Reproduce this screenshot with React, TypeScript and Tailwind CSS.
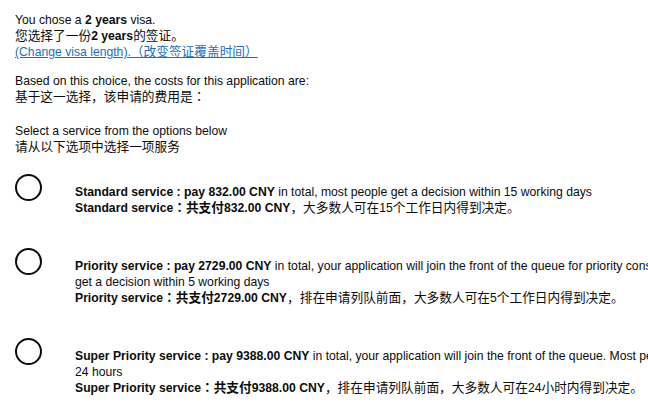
import React from "react";

const font = { fontFamily: '"Liberation Sans", "Noto Sans CJK SC", sans-serif' };
const jp = { fontFamily: '"Noto Sans CJK JP", sans-serif' };

function C({ children }: { children: React.ReactNode }) {
  return <span className="text-[12.7px]">{children}</span>;
}

function Colon() {
  return <span className="text-[12.7px] leading-[1px]" style={jp}>：</span>;
}

function Radio() {
  return <div className="w-[27px] h-[27px] shrink-0 rounded-full border-2 border-[#0b0c0c] bg-white" />;
}

function Row({ children }: { children: React.ReactNode }) {
  return (
    <div className="flex items-start mb-[32px]">
      <Radio />
      <div className="ml-[33px] mt-[10px] whitespace-nowrap">{children}</div>
    </div>
  );
}

export default function App() {
  return (
    <div className="w-[648px] h-[420px] overflow-hidden bg-white text-[#0b0c0c] text-[12.2px] leading-[16px]" style={font}>
      <div className="pl-[15px] pt-[12px]">
        <div className="h-4">You chose a <b>2 years</b> visa.</div>
        <div className="h-4"><C>您选择了一份</C><b>2 years</b><C>的签证。</C></div>
        <div className="h-4">
          <a href="#" className="text-[#1d70b8] underline">(Change visa length).<C>（改变签证覆盖时间）</C></a>
        </div>
        <div className="h-4 mt-[13px]">Based on this choice, the costs for this application are:</div>
        <div className="h-4"><C>基于这一选择，该申请的费用是</C><Colon /></div>
        <div className="h-4 mt-[18px]">Select a service from the options below</div>
        <div className="h-4"><C>请从以下选项中选择一项服务</C></div>
        <div className="mt-[19px]">
          <Row>
            <div className="h-4"><b>Standard service : pay 832.00 CNY</b> in total, most people get a decision within 15 working days</div>
            <div className="h-4"><b>Standard service<Colon /><C>共支付</C>832.00 CNY</b><C>，大多数人可在</C>15<C>个工作日内得到决定。</C></div>
          </Row>
          <Row>
            <div className="h-4"><b>Priority service : pay 2729.00 CNY</b> in total, your application will join the front of the queue for priority consideration. Most people</div>
            <div className="h-4">get a decision within 5 working days</div>
            <div className="h-4"><b>Priority service<Colon /><C>共支付</C>2729.00 CNY</b><C>，排在申请列队前面，大多数人可在</C>5<C>个工作日内得到决定。</C></div>
          </Row>
          <Row>
            <div className="h-4"><b>Super Priority service : pay 9388.00 CNY</b> in total, your application will join the front of the queue. Most people get a decision within</div>
            <div className="h-4">24 hours</div>
            <div className="h-4"><b>Super Priority service<Colon /><C>共支付</C>9388.00 CNY</b><C>，排在申请列队前面，大多数人可在</C>24<C>小时内得到决定。</C></div>
          </Row>
        </div>
      </div>
    </div>
  );
}
